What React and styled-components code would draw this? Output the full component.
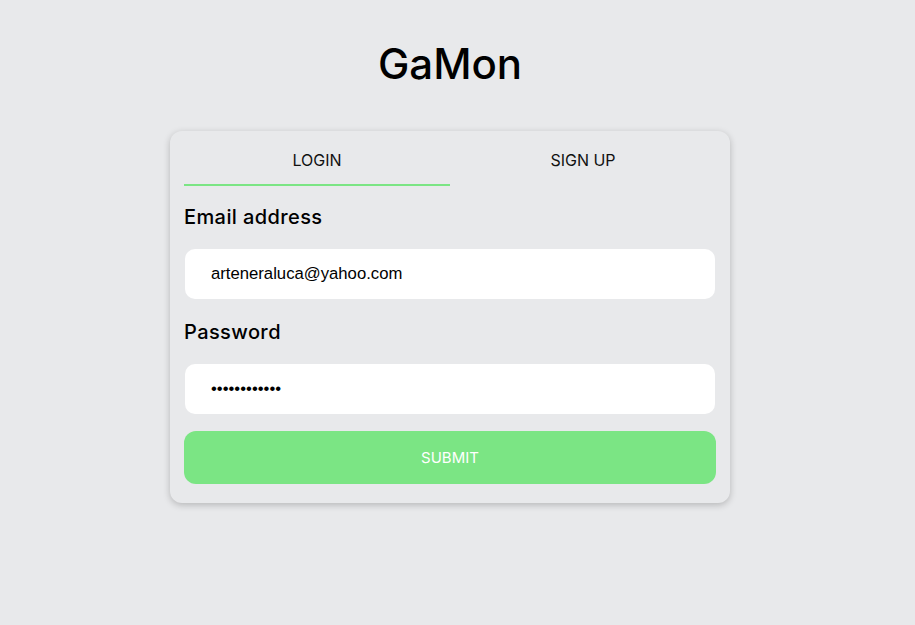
import styled, { createGlobalStyle } from "styled-components";

const GlobalStyle = createGlobalStyle`
  html, body {
    margin: 0;
    background: #e8e9eb;
  }
  body {
    font-family: "Inter", "Noto Sans", sans-serif;
  }
`;

const Page = styled.div`
  display: flex;
  flex-direction: column;
  align-items: center;
  padding: 34px 15px 40px 0;
`;

const Title = styled.h1`
  margin: 0;
  font-size: 42px;
  line-height: 60px;
  font-weight: 500;
  color: #000;
`;

const Card = styled.div`
  margin-top: 37px;
  width: 560px;
  box-sizing: border-box;
  padding: 0 14px 19px;
  border-radius: 12px;
  background: #e8e9eb;
  box-shadow: 0 2px 7px rgba(0, 0, 0, 0.22);
`;

const Tabs = styled.div`
  display: grid;
  grid-template-columns: 1fr 1fr;
`;

const Tab = styled.button`
  height: 55px;
  border: none;
  border-bottom: 2px solid ${(p) => (p.$active ? "#7be584" : "transparent")};
  background: transparent;
  font-family: inherit;
  font-size: 16px;
  font-weight: 400;
  color: #111;
  text-transform: uppercase;
  padding: 4px 0 0;
  cursor: pointer;
`;

const Field = styled.div`
  display: flex;
  flex-direction: column;
`;

const Label = styled.label`
  margin-top: ${(p) => p.$top}px;
  font-size: 20px;
  line-height: 30px;
  font-weight: 500;
  letter-spacing: 0.4px;
  color: #000;
`;

const Input = styled.input`
  margin: 17px 1px 0;
  height: 50px;
  box-sizing: border-box;
  border: none;
  border-radius: 10px;
  background: #fff;
  padding: 0 26px;
  font-family: "Liberation Sans", Arial, sans-serif;
  font-size: 16.7px;
  color: #000;
  outline: none;
`;

const Submit = styled.button`
  margin-top: 17px;
  width: 100%;
  height: 53px;
  border: none;
  border-radius: 12px;
  background: #7be584;
  color: #fff;
  font-family: inherit;
  font-size: 15px;
  text-transform: uppercase;
  cursor: pointer;
`;

export default function App() {
  return (
    <>
      <GlobalStyle />
      <Page>
        <Title>GaMon</Title>
        <Card>
          <Tabs>
            <Tab $active>Login</Tab>
            <Tab>Sign up</Tab>
          </Tabs>
          <Field>
            <Label $top={16}>Email address</Label>
            <Input type="email" defaultValue="arteneraluca@yahoo.com" />
          </Field>
          <Field>
            <Label $top={18}>Password</Label>
            <Input type="password" defaultValue="gamonpass123" />
          </Field>
          <Submit>Submit</Submit>
        </Card>
      </Page>
    </>
  );
}
